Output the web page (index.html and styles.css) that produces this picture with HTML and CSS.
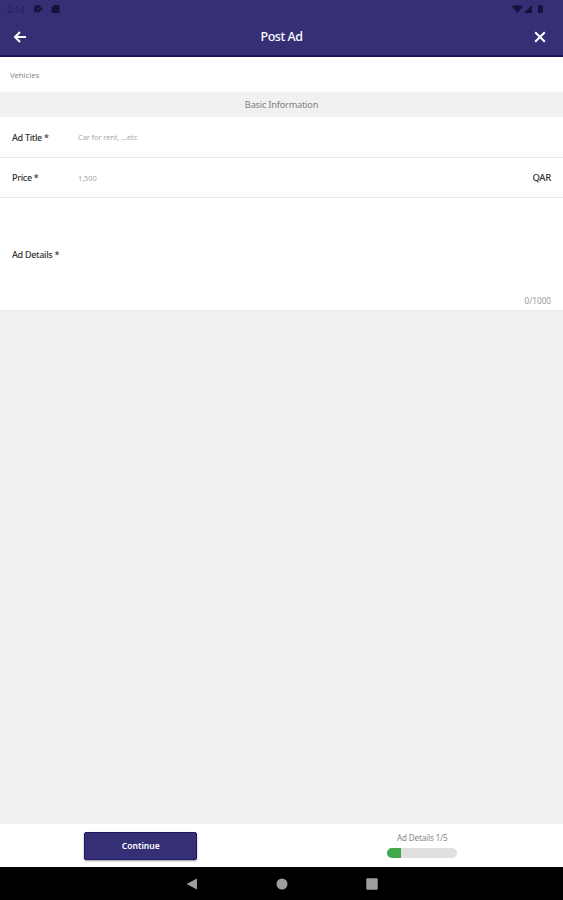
FILE: index.html
```html
<!DOCTYPE html>
<html lang="en">
<head>
    <meta charset="UTF-8">
    <meta name="viewport" content="width=device-width, initial-scale=1.0">
    <title>Post Ad</title>
    <link rel="stylesheet" href="styles.css">
</head>
<body>
    <div class="screen">
        <header class="header">
            <div class="status-bar">
                <span class="time">2:14</span>
                <svg class="status-left" width="28" height="10" viewBox="0 0 28 10">
                    <path d="M4.500 1a3.600 3.600 0 0 1 3.400 2.400L10 5 7.800 6.200A3.600 3.600 0 0 1 3 8L1 9l.5-2.500A3.600 3.600 0 0 1 4.500 1z"/>
                    <circle class="dot" cx="4.800" cy="4.500" r="1"/>
                    <path d="M21 1h5.500v8h-8V3.500z"/>
                </svg>
                <svg class="status-right" width="33" height="10" viewBox="0 0 33 10">
                    <path d="M0 2.500Q5.500-.5 11 2.500L5.500 9z"/>
                    <path d="M20 1v8h-8z"/>
                    <path d="M26 1.800h1.200V1h2.600v.8H31V9h-5z"/>
                </svg>
            </div>
            <div class="title-bar">
                <svg class="icon" width="14" height="14" viewBox="0 0 14 14">
                    <path d="M13 7H2M7 2 2 7l5 5"/>
                </svg>
                <h1>Post Ad</h1>
                <svg class="icon" width="14" height="14" viewBox="0 0 14 14">
                    <path d="M2.200 2.200l9.600 9.600M11.800 2.200l-9.600 9.600"/>
                </svg>
            </div>
        </header>

        <div class="category">Vehicles</div>
        <h2 class="section-title">Basic Information</h2>

        <div class="row">
            <span class="label">Ad Title *</span>
            <span class="placeholder">Car for rent, ...etc</span>
        </div>
        <div class="row">
            <span class="label">Price *</span>
            <span class="placeholder">1,500</span>
            <span class="unit">QAR</span>
        </div>
        <div class="row details">
            <span class="label">Ad Details *</span>
            <span class="counter">0/1000</span>
        </div>

        <footer class="footer">
            <div class="half">
                <button class="continue">Continue</button>
            </div>
            <div class="half">
                <span class="step">Ad Details 1/5</span>
                <div class="progress"><div class="progress-fill"></div></div>
            </div>
        </footer>

        <nav class="nav-bar">
            <svg width="12" height="12" viewBox="0 0 12 12"><path d="M11 .5v11L.5 6z"/></svg>
            <svg width="12" height="12" viewBox="0 0 12 12"><circle cx="6" cy="6" r="5.500"/></svg>
            <svg width="12" height="12" viewBox="0 0 12 12"><rect x=".3" y=".3" width="11.400" height="11.400" rx="1"/></svg>
        </nav>
    </div>
</body>
</html>
```
FILE: styles.css
```css
* {
    box-sizing: border-box;
}
body {
    margin: 0;
    font-family: "Noto Sans", "Open Sans", sans-serif;
    background-color: #f1f1f1;
    color: #333;
}
.screen {
    display: flex;
    flex-direction: column;
    height: 900px;
}
.header {
    height: 57px;
    background-color: #352f75;
    border-bottom: 2px solid #1b1259;
}
.status-bar {
    display: flex;
    align-items: center;
    height: 18px;
    padding: 0 18px 0 7px;
    fill: #15133a;
}
.time {
    width: 26px;
    font-size: 8px;
    letter-spacing: 0.5px;
    color: #211c52;
}
.status-left .dot {
    fill: #352f75;
}
.status-right {
    margin-left: auto;
}
.title-bar {
    display: flex;
    align-items: center;
    justify-content: space-between;
    height: 38px;
    padding: 0 16px 0 13px;
}
.title-bar h1 {
    margin: 0;
    padding: 0 0 1px 3px;
    font-size: 12.5px;
    font-weight: 500;
    letter-spacing: -0.5px;
    color: #fff;
}
.icon {
    fill: none;
    stroke: #fff;
    stroke-width: 2;
}
.category {
    height: 35px;
    padding-left: 10px;
    font-size: 7.7px;
    line-height: 36px;
    color: #888;
    background-color: #fff;
}
.section-title {
    height: 25px;
    margin: 0;
    font-size: 9.2px;
    font-weight: 400;
    line-height: 26px;
    letter-spacing: -0.2px;
    text-align: center;
    color: #808080;
}
.row {
    display: flex;
    align-items: center;
    height: 41px;
    padding: 0 12px;
    border-bottom: 1px solid #e9e9e9;
    background-color: #fff;
}
.row + .row {
    height: 40px;
}
.label {
    width: 66px;
    font-size: 9px;
    font-weight: 500;
    letter-spacing: -0.3px;
}
.placeholder {
    font-size: 7.5px;
    letter-spacing: -0.1px;
    color: #aaa;
}
.unit {
    margin-left: auto;
    font-size: 9.5px;
    font-weight: 500;
    letter-spacing: -0.3px;
}
.row + .row.details {
    height: 113px;
}
.counter {
    align-self: flex-end;
    margin-left: auto;
    padding-bottom: 4px;
    font-size: 8.2px;
    color: #999;
}
.footer {
    display: flex;
    height: 43px;
    margin-top: auto;
    background-color: #fff;
}
.half {
    display: flex;
    flex: 1;
    flex-direction: column;
    align-items: center;
    padding-top: 8px;
}
.continue {
    width: 113px;
    height: 28px;
    padding: 0 0 1px;
    border: 1px solid #211760;
    border-radius: 2px;
    font-family: inherit;
    font-size: 8.5px;
    font-weight: 600;
    color: #fff;
    background-color: #352f75;
    box-shadow: 0 1px 2px rgba(0, 0, 0, 0.4);
}
.step {
    font-size: 8px;
    line-height: 11px;
    letter-spacing: -0.1px;
    color: #888;
}
.progress {
    width: 70px;
    height: 10px;
    margin-top: 5px;
    border-radius: 5px;
    overflow: hidden;
    background-color: #e0e0e0;
}
.progress-fill {
    width: 20%;
    height: 100%;
    background-color: #43a84b;
}
.nav-bar {
    display: flex;
    align-items: center;
    justify-content: center;
    gap: 78px;
    height: 33px;
    background-color: #000;
    fill: #9e9e9e;
}
```
